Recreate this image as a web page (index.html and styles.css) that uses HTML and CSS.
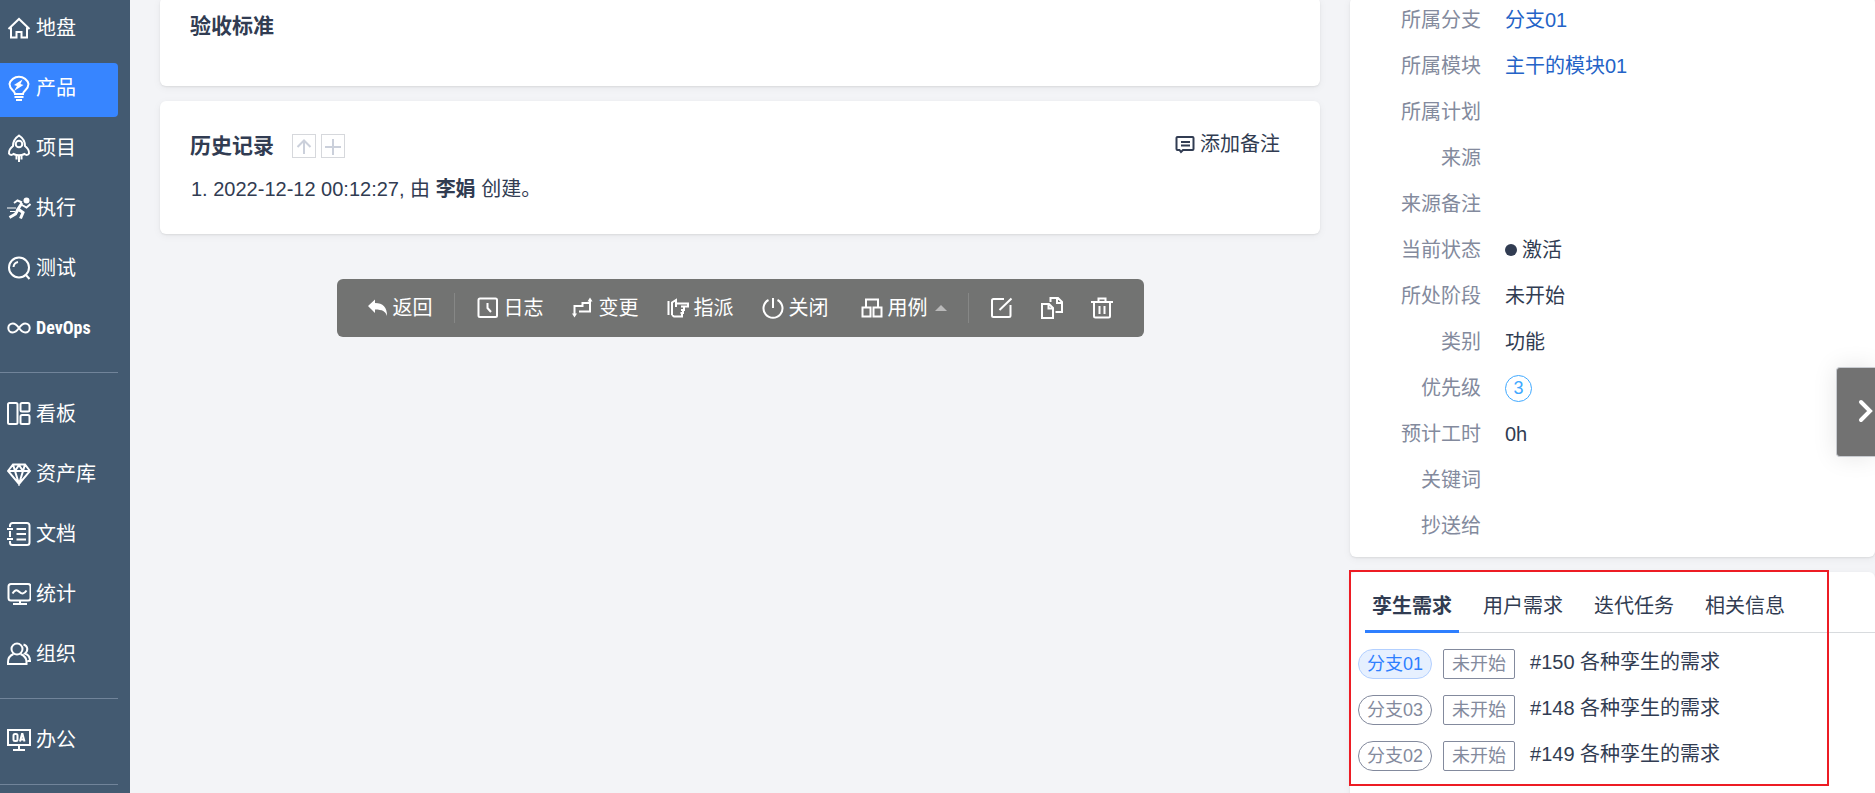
FILE: index.html
```html
<!DOCTYPE html>
<html lang="zh-CN">

<head>
  <meta charset="UTF-8" />
  <meta name="viewport" content="width=device-width, initial-scale=1.0" />
  <title>需求详情</title>
  <link rel="stylesheet" href="styles.css">
</head>

<body>
  <nav class="menu">
    <a class="menu-item" href="#">
      <svg class="icon" viewBox="0 0 24 24"><path d="M1.500 13 12 3l10.500 10M4 11.500v10h5.500V16h5v5.500H20v-10" /></svg>地盘</a>
    <a class="menu-item active" href="#">
      <svg class="icon tall" viewBox="0 0 24 28"><path d="M8 20c0-3-5.500-4.500-5.500-10a9.700 9 0 0 1 19 0c0 5.500-5.500 7-5.500 10zM7.500 23h9M9 26h6" /><path class="fill" d="M15.500 5.500 7 11l3 1-3 5 9.500-6-3-1z" /></svg>产品</a>
    <a class="menu-item" href="#">
      <svg class="icon tall" viewBox="0 0 24 28"><path d="M12 1.500C8 4 6 7.500 6 12c-2.500 2-4.500 4-4 7.500 1 1.500 2.500 2 4.500.5 3 1.500 8 1.500 11 0 2 1.500 3.500 1 4.500-.5.5-3.500-1.500-5.500-4-7.500 0-4.500-2-8-6-10.500zM9.500 21v4.500M12 21v7M14.500 21v4.500" /><circle cx="12" cy="10" r="3.300" /></svg>项目</a>
    <a class="menu-item" href="#">
      <svg class="icon" viewBox="0 0 24 24"><circle class="fill" cx="19.500" cy="4.500" r="3" /><path class="thick" d="m15 7-4 6 5 3.500-2.500 6M11 13.500 8.500 18 2.500 21.500" /><path d="M15 6.500 10.500 4.500 7 7M15 9l4.500 2.500L23.500 8" /><path class="thin" d="M0 12h9M3 15.500h5" /></svg>执行</a>
    <a class="menu-item" href="#">
      <svg class="icon" viewBox="0 0 24 24"><circle cx="12" cy="11.500" r="10" /><path d="m18.500 18.500 4 4.500M6.500 11c.3-2.500 2-4.500 4.500-5" /></svg>测试</a>
    <a class="menu-item devops" href="#">
      <svg class="icon" viewBox="0 0 24 24"><path d="M12 12C9.500 8.500 8 7.500 5.800 7.500a4.500 4.500 0 0 0 0 9C8 16.500 9.500 15.500 12 12s4-4.500 6.200-4.500a4.500 4.500 0 0 1 0 9C16 16.500 14.500 15.500 12 12z" /></svg>DevOps</a>
    <hr class="menu-line">
    <a class="menu-item" href="#">
      <svg class="icon" viewBox="0 0 24 24"><rect x="1" y="1" width="9.500" height="21" rx="1.500" /><rect x="13.500" y="1" width="9" height="8.500" rx="1.500" /><rect x="13.500" y="13" width="9" height="9" rx="1.500" /></svg>看板</a>
    <a class="menu-item" href="#">
      <svg class="icon" viewBox="0 0 24 24"><path d="M6 2.500h12L23 9 12 22 1 9zM1 9h22M6 2.500 8 9l4 13 4-13 2-6.500M8 9l4-6 4 6" /></svg>资产库</a>
    <a class="menu-item" href="#">
      <svg class="icon" viewBox="0 0 24 24"><path d="M3 5V3.500A2.500 2.500 0 0 1 5.500 1H20a2.500 2.500 0 0 1 2.500 2.500v17A2.500 2.500 0 0 1 20 23H5.500A2.500 2.500 0 0 1 3 20.500V19M3 9v6M0 7h6M0 17h6M9.500 7H19M9.500 12H19M9.500 17.500H19" /></svg>文档</a>
    <a class="menu-item" href="#">
      <svg class="icon" viewBox="0 0 24 24"><rect x="1.500" y="2" width="22" height="16.500" rx="2.500" /><path d="M5.500 11.500c3-5 5-3.500 7-1.500s4.500 2.500 7-1.500M6 22h14M13 18.500V22" /></svg>统计</a>
    <a class="menu-item" href="#">
      <svg class="icon" viewBox="0 0 24 24"><circle cx="10" cy="7" r="5.500" /><path d="M6.500 12C3 13.500 1 16.500 1 20v2h18.500v-2c0-3.500-2.500-6.500-6-8M16.500 2.500c4.500 1.500 5 6 1.500 9 3 1 5 4 5 7.500h-2.500" /></svg>组织</a>
    <hr class="menu-line">
    <a class="menu-item" href="#">
      <svg class="icon" viewBox="0 0 24 24"><path d="M1 2h22v15H1zM6 22h12M12 17v5" /><rect x="6.500" y="6" width="4" height="7" rx="1.500" /><path d="m13 13.500 2-7.500h.5l2 7.500M14 11.500h3" /></svg>办公</a>
    <hr class="menu-line">
  </nav>

  <main class="page">
    <div class="main-col">
      <section class="card spec">
        <h2 class="title">验收标准</h2>
      </section>

      <section class="card history">
        <div class="history-head">
          <h2 class="title">历史记录</h2>
          <button class="btn-square" type="button" aria-label="切换排序">
            <svg viewBox="0 0 22 22"><path d="M11 19V6M4.500 12 11 5.500l6.500 6.500" /></svg>
          </button>
          <button class="btn-square" type="button" aria-label="切换显示">
            <svg viewBox="0 0 22 22"><path d="M11 4v16M3 12h16" /></svg>
          </button>
          <button class="btn-comment" type="button">
            <svg class="icon small" viewBox="0 0 20 20"><path d="M2.500 3h15a1 1 0 0 1 1 1v11a1 1 0 0 1-1 1H8l-2 2-1.500-2h-2a1 1 0 0 1-1-1V4a1 1 0 0 1 1-1zM6 8h9M6 11.500h9" /></svg>添加备注</button>
        </div>
        <p class="history-row">1. 2022-12-12 00:12:27, 由 <strong>李娟</strong> 创建。</p>
      </section>

      <div class="toolbar">
        <button class="tool" type="button">
          <svg class="icon small" viewBox="0 0 20 20"><path class="fill" d="M0 8 7 1.500V5c8 0 12 4 12 13-1.500-4.500-4.500-6.500-12-6.500v3.500z" /></svg>返回</button>
        <span class="split"></span>
        <button class="tool" type="button">
          <svg class="icon" viewBox="0 0 22 22"><rect x="1.500" y="1.500" width="18.500" height="18.500" rx="1.500" /><path d="M10.500 6v5l3.500 4" /></svg>日志</button>
        <button class="tool" type="button">
          <svg class="icon" viewBox="0 0 22 22"><path d="M2.500 17V9h8V6H18M18 4v10.500H7" /><path class="fill" d="M0 16.500h5l-2.500 4zM15.500 4.500h5L18 .5z" /></svg>变更</button>
        <button class="tool" type="button">
          <svg class="icon" viewBox="0 0 22 22"><path d="M1.500 4v14M5 18V5.500L9 3v3.500h12v3h-7M9 10V7M17 10v3h-3M16 13v3h-2.500M15 16v3.500H7L5 18" /></svg>指派</button>
        <button class="tool" type="button">
          <svg class="icon" viewBox="0 0 22 22"><path d="M6.500 3a9.500 9.500 0 1 0 9 0M11 1v10" /></svg>关闭</button>
        <button class="tool dropdown" type="button">
          <svg class="icon" viewBox="0 0 22 22"><path d="M5 10V2.500h12V10M1.500 10.500h8v9h-8zM12.500 10.500h8v9h-8z" /></svg>用例<span class="caret"></span></button>
        <span class="split"></span>
        <button class="tool" type="button" aria-label="编辑">
          <svg class="icon" viewBox="0 0 22 22"><path d="M13 2H2.500A1.500 1.500 0 0 0 1 3.500v15A1.500 1.500 0 0 0 2.500 20H18a1.500 1.500 0 0 0 1.500-1.500V8M8.500 13 20.500 1.500" /></svg></button>
        <button class="tool" type="button" aria-label="复制">
          <svg class="icon" viewBox="0 0 22 22"><path d="M1 7h7l4 4v10H1zM7.500 7v4.500H12M9.500 5V1H17l4 4v10h-6.500M16 1v5h5" /></svg></button>
        <button class="tool" type="button" aria-label="删除">
          <svg class="icon" viewBox="0 0 22 22"><path d="M0 5h22M7.500 5V1.500h7V5M3 5v14a1.500 1.500 0 0 0 1.500 1.500h13A1.500 1.500 0 0 0 19 19V5M8.500 9v8M13.500 9v8" /></svg></button>
      </div>
    </div>

    <aside class="side-col">
      <section class="card">
        <dl class="info">
          <dt>所属分支</dt><dd><a href="#">分支01</a></dd>
          <dt>所属模块</dt><dd><a href="#">主干的模块01</a></dd>
          <dt>所属计划</dt><dd></dd>
          <dt>来源</dt><dd></dd>
          <dt>来源备注</dt><dd></dd>
          <dt>当前状态</dt><dd><span class="dot"></span>激活</dd>
          <dt>所处阶段</dt><dd>未开始</dd>
          <dt>类别</dt><dd>功能</dd>
          <dt>优先级</dt><dd><span class="pri">3</span></dd>
          <dt>预计工时</dt><dd>0h</dd>
          <dt>关键词</dt><dd></dd>
          <dt>抄送给</dt><dd></dd>
        </dl>
      </section>

      <section class="card related">
        <div class="tabs">
          <a class="tab active" href="#">孪生需求</a>
          <a class="tab" href="#">用户需求</a>
          <a class="tab" href="#">迭代任务</a>
          <a class="tab" href="#">相关信息</a>
        </div>
        <ul class="twins">
          <li><span class="branch current">分支01</span><span class="stage">未开始</span><a href="#">#150 各种孪生的需求</a></li>
          <li><span class="branch">分支03</span><span class="stage">未开始</span><a href="#">#148 各种孪生的需求</a></li>
          <li><span class="branch">分支02</span><span class="stage">未开始</span><a href="#">#149 各种孪生的需求</a></li>
        </ul>
        <div class="mark"></div>
      </section>
    </aside>
  </main>

  <button class="next" type="button" aria-label="下一个">
    <svg viewBox="0 0 16 24"><path d="m3 3 9 9-9 9" /></svg>
  </button>
</body>

</html>
```
FILE: styles.css
```css
* {
  box-sizing: border-box;
}
body {
  margin: 0;
  height: 100vh;
  overflow: hidden;
  display: flex;
  background: #f3f4f7;
  color: #313c52;
  font-family: 'Liberation Sans', 'Noto Sans CJK SC', sans-serif;
  font-size: 20px;
  line-height: 30px;
}
a {
  color: inherit;
  text-decoration: none;
}
button {
  font: inherit;
  color: inherit;
  background: none;
  border: none;
  padding: 0;
  cursor: pointer;
}
svg {
  display: block;
  fill: none;
  stroke: currentColor;
  stroke-width: 2;
}
svg .fill {
  fill: currentColor;
  stroke: none;
}
svg .thick {
  stroke-width: 3;
}
svg .thin {
  stroke-width: 1;
}

/* left menu */
.menu {
  flex: none;
  display: flex;
  flex-direction: column;
  width: 130px;
  padding: 3px 12px 0 0;
  background: #435a71;
  color: #fff;
}
.menu-item {
  flex: none;
  display: flex;
  align-items: center;
  gap: 5px;
  height: 54px;
  margin-bottom: 6px;
  padding: 0 0 4px 7px;
  border-radius: 0 4px 4px 0;
}
.menu-item.active {
  background: #3785ff;
}
.menu-item .icon {
  flex: none;
  width: 24px;
  height: 24px;
}
.menu-item .icon.tall {
  height: 28px;
}
.devops {
  font-family: 'Liberation Sans Narrow', 'Roboto Condensed', 'Liberation Sans', sans-serif;
  font-size: 18px;
  font-weight: 700;
}
.menu-line {
  width: 100%;
  margin: 9px 0 16px;
  border: none;
  border-top: 1px solid #71849a;
}

/* page columns */
.page {
  flex: 1;
  display: flex;
  align-items: flex-start;
  gap: 30px;
  min-width: 0;
  margin-top: -3px;
  padding-left: 30px;
}
.main-col {
  flex: 1160;
  display: flex;
  flex-direction: column;
  gap: 15px;
  min-width: 0;
}
.side-col {
  flex: 525;
  display: flex;
  flex-direction: column;
  gap: 15px;
  min-width: 0;
}
.card {
  background: #fff;
  border-radius: 6px;
  box-shadow: 0 1px 2px rgba(0, 0, 0, 0.08), 0 2px 8px rgba(0, 0, 0, 0.05);
}
.title {
  margin: 0;
  font-size: 21px;
  font-weight: 700;
}
.spec {
  padding: 14px 30px 45px;
}

/* history */
.history {
  padding: 28px 40px 30px 30px;
}
.history-head {
  display: flex;
  align-items: center;
  gap: 5px;
  height: 34px;
}
.history-head .title {
  margin-right: 13px;
}
.btn-square {
  width: 24px;
  height: 24px;
  border: 1px solid #d6d8dc;
  color: #cbd0db;
}
.btn-comment {
  display: flex;
  align-items: center;
  align-self: flex-start;
  gap: 5px;
  margin-left: auto;
}
.icon {
  width: 22px;
  height: 22px;
}
.icon.small {
  width: 20px;
  height: 20px;
}
.history-row {
  margin: 11px 0 0;
  padding-left: 1px;
}
.history-row strong {
  font-weight: 700;
}

/* bottom toolbar */
.toolbar {
  align-self: center;
  display: flex;
  align-items: center;
  height: 58px;
  margin-top: 30px;
  padding: 0 17px;
  border-radius: 6px;
  background: #727372;
  color: #fff;
}
.tool {
  display: flex;
  align-items: center;
  gap: 5px;
  padding: 0 14px;
}
.dropdown {
  margin-left: 4px;
}
.caret {
  margin-left: 2px;
  border: 6px solid transparent;
  border-top: none;
  border-bottom-color: #b9b9b9;
}
.split {
  width: 1px;
  height: 30px;
  margin: 0 8px 0 7px;
  background: #868786;
}

/* basic info */
.info {
  display: grid;
  grid-template-columns: 131px 1fr;
  grid-auto-rows: 46px;
  column-gap: 24px;
  align-items: center;
  margin: 0;
  padding-bottom: 8px;
}
.info dt {
  text-align: right;
  color: #838a9d;
}
.info dd {
  display: flex;
  align-items: center;
  margin: 0;
}
.info a {
  color: #2463c7;
}
.dot {
  width: 12px;
  height: 12px;
  margin-right: 5px;
  border-radius: 50%;
  background: #313c52;
}
.pri {
  width: 27px;
  height: 27px;
  border: 1px solid #40a9ff;
  border-radius: 50%;
  color: #40a9ff;
  font-size: 18px;
  line-height: 25px;
  text-align: center;
}

/* related tabs */
.related {
  position: relative;
  min-height: 240px;
}
.tabs {
  display: flex;
  gap: 17px;
  margin-left: 15px;
  padding-top: 12px;
  border-bottom: 1px solid #d8dbde;
}
.tab {
  height: 49px;
  margin-bottom: -1px;
  padding: 7px 7px 0;
}
.tab.active {
  font-weight: 700;
  border-bottom: 3px solid #2e7fff;
}
.twins {
  list-style: none;
  margin: 0;
  padding: 8px 0 0 8px;
}
.twins li {
  display: flex;
  align-items: center;
  height: 46px;
}
.twins a {
  padding-bottom: 4px;
}
.branch,
.stage {
  height: 30px;
  padding: 0 8px;
  border: 1px solid #838a9d;
  border-radius: 15px;
  color: #838a9d;
  font-size: 18px;
  line-height: 28px;
}
.branch.current {
  border-color: #b3d0ff;
  background: #e6f0ff;
  color: #2e7fff;
}
.stage {
  margin: 0 15px 0 11px;
  border-radius: 2px;
}
.mark {
  position: absolute;
  top: -2px;
  left: -1px;
  width: 480px;
  height: 216px;
  border: 2px solid #ed1c24;
  pointer-events: none;
}

.next {
  position: fixed;
  top: 367px;
  right: 0;
  width: 39px;
  height: 90px;
  padding: 0 0 2px 21px;
  border: 1px solid #c8cbd0;
  border-right: none;
  border-radius: 4px 0 0 4px;
  background: #727272;
  color: #fff;
  box-shadow: 0 0 24px rgba(0, 0, 0, 0.1);
}
.next svg {
  width: 16px;
  height: 24px;
  stroke-width: 4;
  stroke-linecap: round;
}
```
